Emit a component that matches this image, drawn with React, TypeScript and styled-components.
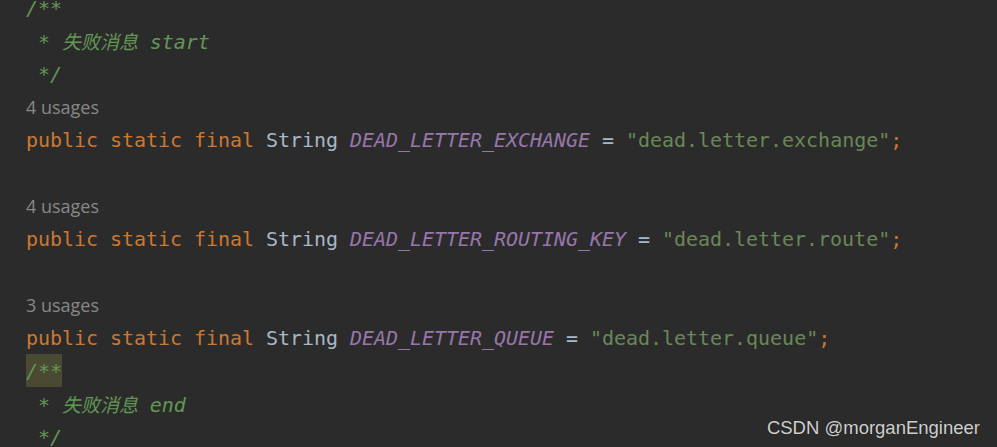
import React from "react";
import styled, { createGlobalStyle } from "styled-components";

const Global = createGlobalStyle`
  html, body { margin: 0; padding: 0; background: #2b2b2b; overflow: hidden; }
  body { width: 997px; height: 447px; }
`;

const Editor = styled.div`
  position: relative;
  width: 997px;
  height: 447px;
  background: #2b2b2b;
  overflow: hidden;
`;

const Lines = styled.div`
  display: flex;
  flex-direction: column;
  margin-top: -9px;
  padding-left: 26px;
`;

const Line = styled.div`
  height: 33px;
  display: flex;
  align-items: center;
  white-space: pre;
  font-family: "DejaVu Sans Mono", "Noto Sans CJK SC", monospace;
  font-size: 20px;
  letter-spacing: -0.04px;
  color: #a9b7c6;
`;

const Usages = styled.div`
  height: 33px;
  display: flex;
  align-items: center;
  font-family: "Open Sans", "Noto Sans", sans-serif;
  font-size: 18px;
  color: #888888;
`;

type Kind = "kw" | "cls" | "const" | "str" | "op" | "semi" | "doc";

const colors: Record<Kind, string> = {
  kw: "#cc7832",
  cls: "#a9b7c6",
  const: "#9876aa",
  str: "#6a8759",
  op: "#a9b7c6",
  semi: "#cc7832",
  doc: "#629755",
};

const Tok = styled.span<{ $k: Kind; $hl?: boolean }>`
  color: ${(p) => colors[p.$k]};
  font-style: ${(p) => (p.$k === "const" || p.$k === "doc" ? "italic" : "normal")};
  background: ${(p) => (p.$hl ? "#4a4a33" : "transparent")};
  ${(p) => (p.$hl ? "display: inline-flex; align-items: center; height: 33px;" : "")}
`;

const Cjk = styled.span`
  font-family: "Noto Sans CJK SC", sans-serif;
  font-size: 19px;
  font-style: italic;
`;

const Watermark = styled.div`
  position: absolute;
  right: 17px;
  bottom: 8px;
  font-family: "Liberation Sans", Arial, sans-serif;
  font-size: 18.5px;
  color: #d0d0d0;
  text-shadow: 0 0 1px rgba(0, 0, 0, 0.5);
`;

const Decl = ({ name, value }: { name: string; value: string }) => (
  <Line>
    <Tok $k="kw">public static final </Tok>
    <Tok $k="cls">String </Tok>
    <Tok $k="const">{name}</Tok>
    <Tok $k="op"> = </Tok>
    <Tok $k="str">"{value}"</Tok>
    <Tok $k="semi">;</Tok>
  </Line>
);

export default function App() {
  return (
    <Editor>
      <Global />
      <Lines>
        <Line>
          <Tok $k="doc">/**</Tok>
        </Line>
        <Line>
          <Tok $k="doc">
            {" * "}
            <Cjk>失败消息</Cjk>
            {" start"}
          </Tok>
        </Line>
        <Line>
          <Tok $k="doc"> */</Tok>
        </Line>
        <Usages>4 usages</Usages>
        <Decl name="DEAD_LETTER_EXCHANGE" value="dead.letter.exchange" />
        <Line />
        <Usages>4 usages</Usages>
        <Decl name="DEAD_LETTER_ROUTING_KEY" value="dead.letter.route" />
        <Line />
        <Usages>3 usages</Usages>
        <Decl name="DEAD_LETTER_QUEUE" value="dead.letter.queue" />
        <Line>
          <Tok $k="doc" $hl>
            /**
          </Tok>
        </Line>
        <Line>
          <Tok $k="doc">
            {" * "}
            <Cjk>失败消息</Cjk>
            {" end"}
          </Tok>
        </Line>
        <Line>
          <Tok $k="doc"> */</Tok>
        </Line>
      </Lines>
      <Watermark>CSDN @morganEngineer</Watermark>
    </Editor>
  );
}
